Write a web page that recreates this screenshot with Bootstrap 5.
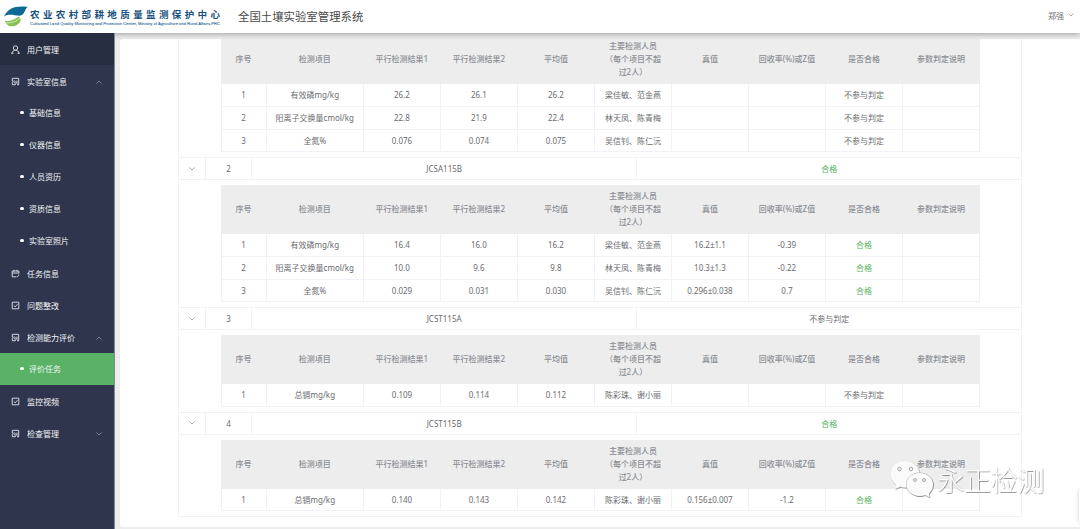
<!DOCTYPE html>
<html lang="zh-CN">
<head>
<meta charset="utf-8">
<title>全国土壤实验室管理系统</title>
<link href="https://cdn.jsdelivr.net/npm/bootstrap@5.3.0/dist/css/bootstrap.min.css" rel="stylesheet">
<style>
body{font-family:"Noto Sans","Noto Sans CJK SC",sans-serif;font-size:8px;line-height:13px;color:#6a6c70;background:#ededed;height:100vh;overflow:hidden}
.topbar{height:33px;background:#fff;box-shadow:0 1px 6px rgba(0,0,0,.34);z-index:5;position:relative}
.brand-logo{width:222px;height:33px;flex:none;overflow:visible}
.sys-title{font-size:11.4px;color:#4a4a4a;margin-left:16px;margin-top:-1px}
.user-name{color:#707276;padding-right:6px;margin-top:-3px}
.side{width:115px;background:#2e354d;border-right:1px solid #858994;z-index:6;position:relative}
.side a{height:32px;color:#f4f5f7;text-decoration:none;padding:1px 12px 0 11px;line-height:30px}
.side a.first{background:#272e42}
.side a.sub{padding-left:20px;padding-top:.5px}
.side a.on{background:#5ab266}
.side a.sub::before{content:"";width:3.6px;height:3.6px;border-radius:50%;background:#fff;margin-right:5.4px;margin-top:-1.500px}
.side svg.ico{width:9px;height:9px;margin-right:7px;margin-top:-1px;fill:none;stroke:#e4e6ea;stroke-width:.9}
.chev{width:6px;height:4px;fill:none;stroke:#909399;stroke-width:.8}
.panel{margin:6px 0 2px 5px;background:#fff;border-radius:3px 0 0 3px;overflow:hidden}
.results{margin-left:58px;width:844px;margin-top:-9px;border:1px solid #f1f2f7;border-top:0;border-bottom:0}
.sum-row{display:grid;grid-template-columns:26px 46px 385.3px 1fr;height:22.75px;border-top:1px solid #f1f2f7;border-bottom:1px solid #f1f2f7}
.sum-row>div,.rec>div{display:flex;align-items:center;justify-content:center;text-align:center}
.sum-row>div+div,.rec>div+div{border-left:1px solid #f1f2f7}
.detail{padding:5px 0 5px 41.500px}
.rec{display:grid;grid-template-columns:44.2px 97.2px repeat(7,77.03px) 1fr;width:759.500px;height:22.75px;border:1px solid #f1f2f7;border-top:0;white-space:nowrap}
.rec.heading{height:49px;background:#ededed;border-color:#ededed;border-bottom:0;color:#8b8e94;font-weight:500}
.rec.heading>div{border-left-color:#ededed;padding-bottom:2px}
.ok{color:#5ab266}
.last-line{border-bottom:1px solid #f1f2f7}
.mark-sign{position:absolute;left:888px;top:456px;width:170px;height:50px;z-index:9}
.float-tab{position:absolute;right:-10px;top:490px;width:11px;height:32px;box-shadow:0 0 4px rgba(0,0,0,.2);background:#fff}
</style>
</head>
<body class="d-flex flex-column position-relative">
<header class="topbar d-flex align-items-center flex-shrink-0">
<svg class="brand-logo" viewBox="0 0 222 33">
<path d="M4 16.500C8 8 16 5.500 27.500 7C24.500 9.500 25 15 19.500 15.700C14 15.500 9 13.500 4 16.500Z" fill="#0d6a96"/>
<path d="M4.800 20.500C8 22.300 14 20 19 16.500C23 20 19 25.500 13 26.300C9 26.600 5.500 24.500 4.800 20.500Z" fill="#86c250"/>
<path d="M5.500 22.800C12 23.300 16 21.500 20 18" stroke="#fff" stroke-width=".6" fill="none"/>
<text x="30" y="18.400" font-family="Noto Sans CJK SC,sans-serif" font-weight="700" font-size="9.500" textLength="190" fill="#174f80">农业农村部耕地质量监测保护中心</text>
<text x="30" y="25.200" font-family="Liberation Sans,sans-serif" font-size="4.400" textLength="190" lengthAdjust="spacingAndGlyphs" fill="#28659a" stroke="#28659a" stroke-width=".08">Cultivated Land Quality Monitoring and Protection Center, Ministry of Agriculture and Rural Affairs,PRC</text>
</svg>
<div class="sys-title">全国土壤实验室管理系统</div>
<div class="user-name ms-auto d-flex align-items-center">郑强<svg class="chev ms-1" viewBox="0 0 6 4"><path d="M.5.5 3 3 5.500.5"/></svg></div>
</header>
<div class="d-flex flex-grow-1" style="min-height:0">
<nav class="side flex-shrink-0" id="side"></nav>
<main class="panel flex-grow-1"><div class="results" id="results"></div></main>
</div>
<div class="float-tab"></div>
<svg class="mark-sign" viewBox="0 0 170 50">
<defs><filter id="sh" x="-10%" y="-10%" width="120%" height="120%"><feDropShadow dx=".5" dy=".6" stdDeviation=".5" flood-color="#000" flood-opacity=".65"/></filter></defs>
<g filter="url(#sh)" fill="#fafafa">
<path d="M17 5C8.500 5 2.500 11 2.500 18C2.500 22.500 5 26 8 28.500L7 33L12.500 30.500Q15 31.500 18 31.500C25 31 31.500 25.500 31.500 18C31.500 11 25 5 17 5Z"/>
</g>
<path d="M31.500 17C24 17 18.500 22 18.500 28.500C18.500 35 24.500 40 31.500 40Q34.500 40 37.500 39L41.500 41.500L41 37.500C43.500 35 45 32 45 28.500C45 22 39 17 31.500 17Z" fill="#fafafa" stroke="#aaa" stroke-width=".9"/>
<g filter="url(#sh)">
<path d="M31.500 17C24 17 18.500 22 18.500 28.500C18.500 35 24.500 40 31.500 40Q34.500 40 37.500 39L41.500 41.500L41 37.500C43.500 35 45 32 45 28.500C45 22 39 17 31.500 17Z" fill="#fafafa"/>
<text x="49.500" y="35" font-family="Noto Sans CJK SC,sans-serif" font-weight="300" font-size="27" textLength="107" fill="#fff">永正检测</text>
</g>
<g fill="#eee" stroke="#999" stroke-width=".8"><circle cx="11.500" cy="13" r="1.800"/><circle cx="23" cy="13" r="1.800"/><circle cx="27" cy="24" r="1.500"/><circle cx="36" cy="24" r="1.500"/></g>
</svg>
<script src="https://cdn.jsdelivr.net/npm/bootstrap@5.3.0/dist/js/bootstrap.bundle.min.js"></script>
<script>
const icons={
user:'<circle cx="4.500" cy="3" r="2.200"/><path d="M.8 8.600C1.200 6 3 5.300 4.500 5.300S7.800 6 8.200 8.600M.5 8.300H2.500M6.500 8.300H8.500"/>',
lab:'<path d="M1.300 4V1.300H7.700V7.700H6M1.300 5.200V7.700H4.500M3 3.300 6 6.500V3.500M1.300 4.500C3 4.500 4.400 6 4.500 7.700"/>',
cal:'<path d="M7.800 4.500V2H1.200V7.800H5M1.200 4H7.800M3 .8V2.500M6 .8V2.500M7.800 5.500C7.800 7 7 7.800 5.500 7.800"/>',
check:'<path d="M1.200 1.200H7.800V7.800H1.200ZM2.800 4.500 4.200 5.800 6.500 3.200"/>'
};
const menu=[['用户管理','user','first'],['实验室信息','lab','','up'],['基础信息'],['仪器信息'],['人员资历'],['资质信息'],['实验室照片'],['任务信息','cal',''],['问题整改','check',''],['检测能力评价','lab','','up'],['评价任务','','on'],['监控视频','check',''],['检查管理','lab','','down']];
document.getElementById('side').innerHTML=menu.map(([t,i,c,v])=>
`<a href="#" class="d-flex align-items-center ${i?'':'sub'} ${c||''}">${i?`<svg class="ico" viewBox="0 0 9 9">${icons[i]}</svg>`:''}<span>${t}</span>${v?`<svg class="chev ms-auto" viewBox="0 0 6 4"><path d="${v=='up'?'M.5 3.500 3 1 5.500 3.500':'M.5.5 3 3 5.500.5'}"/></svg>`:''}</a>`).join('');
const heads=['序号','检测项目','平行检测结果1','平行检测结果2','平均值','主要检测人员<br>（每个项目不超<br>过2人）','真值','回收率(%)或Z值','是否合格','参数判定说明'];
const N='不参与判定',Y='合格';
const groups=[
['','',[['有效磷mg/kg','26.2','26.1','26.2','梁佳敏、范金燕','','',N],['阳离子交换量cmol/kg','22.8','21.9','22.4','林天凤、陈青梅','','',N],['全氮%','0.076','0.074','0.075','吴信钊、陈仁沅','','',N]]],
['JCSA115B',Y,[['有效磷mg/kg','16.4','16.0','16.2','梁佳敏、范金燕','16.2±1.1','-0.39',Y],['阳离子交换量cmol/kg','10.0','9.6','9.8','林天凤、陈青梅','10.3±1.3','-0.22',Y],['全氮%','0.029','0.031','0.030','吴信钊、陈仁沅','0.296±0.038','0.7',Y]]],
['JCST115A',N,[['总镉mg/kg','0.109','0.114','0.112','陈彩珠、谢小丽','','',N]]],
['JCST115B',Y,[['总镉mg/kg','0.140','0.143','0.142','陈彩珠、谢小丽','0.156±0.007','-1.2',Y]]]
];
const cell=t=>`<div${t===Y?' class="ok"':''}><span>${t}</span></div>`;
document.getElementById('results').innerHTML=groups.map(([code,res,rows],g)=>
(code?`<div class="sum-row"><div><svg class="chev" viewBox="0 0 6 4"><path d="M.5.5 3 3 5.500.5"/></svg></div>${cell(g+1)}${cell(code)}${cell(res)}</div>`:'')+
`<div class="detail"><div class="rec heading">${heads.map(cell).join('')}</div>${rows.map((r,i)=>`<div class="rec">${[i+1,...r,''].map(cell).join('')}</div>`).join('')}</div>`).join('')+'<div class="last-line"></div>';
</script>
</body>
</html>
